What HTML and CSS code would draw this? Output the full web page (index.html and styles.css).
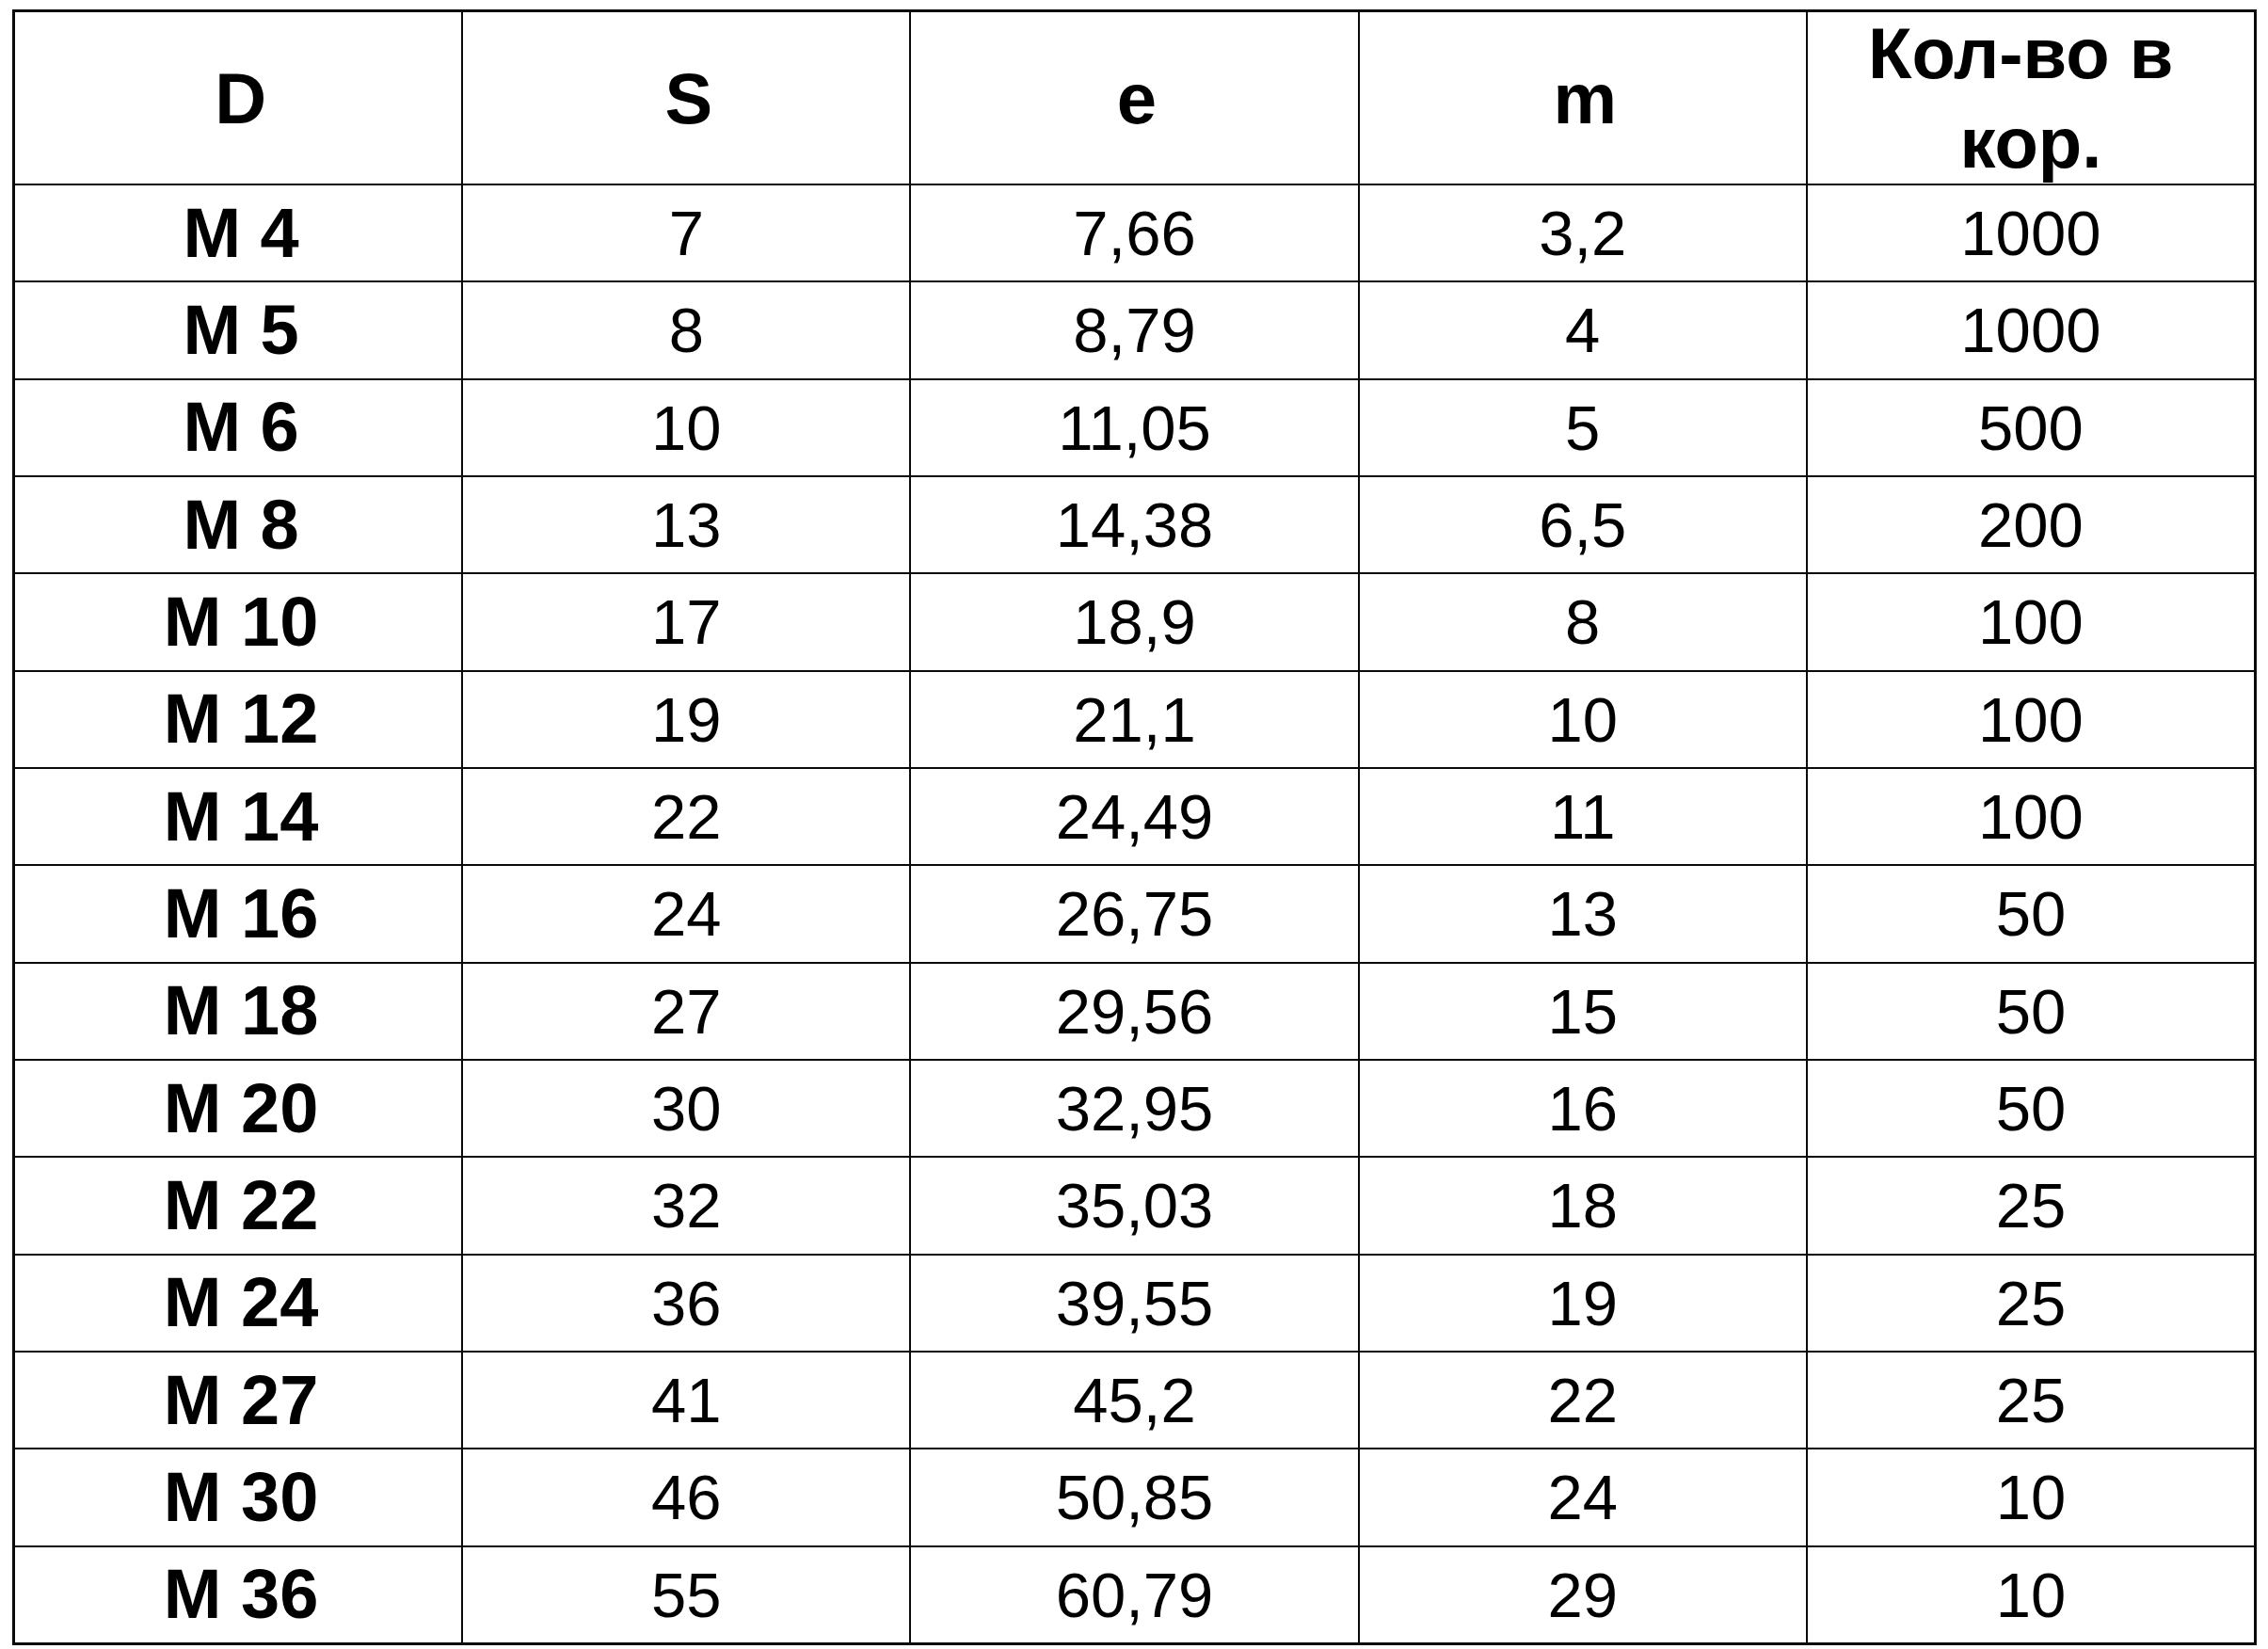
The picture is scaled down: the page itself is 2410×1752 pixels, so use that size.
FILE: index.html
```html
<!DOCTYPE html>
<html lang="ru">
<head>
<meta charset="utf-8">
<title>Размеры гаек</title>
<link rel="stylesheet" href="styles.css">
</head>
<body>
<div class="sheet">
  <div class="cell head shift">D</div>
  <div class="cell head shift">S</div>
  <div class="cell head shift">e</div>
  <div class="cell head shift">m</div>
  <div class="cell head">Кол-во в&nbsp;<br>кор.</div>

  <div class="cell size">M 4</div><div class="cell">7</div><div class="cell">7,66</div><div class="cell">3,2</div><div class="cell">1000</div>
  <div class="cell size">M 5</div><div class="cell">8</div><div class="cell">8,79</div><div class="cell">4</div><div class="cell">1000</div>
  <div class="cell size">M 6</div><div class="cell">10</div><div class="cell">11,05</div><div class="cell">5</div><div class="cell">500</div>
  <div class="cell size">M 8</div><div class="cell">13</div><div class="cell">14,38</div><div class="cell">6,5</div><div class="cell">200</div>
  <div class="cell size">M 10</div><div class="cell">17</div><div class="cell">18,9</div><div class="cell">8</div><div class="cell">100</div>
  <div class="cell size">M 12</div><div class="cell">19</div><div class="cell">21,1</div><div class="cell">10</div><div class="cell">100</div>
  <div class="cell size">M 14</div><div class="cell">22</div><div class="cell">24,49</div><div class="cell">11</div><div class="cell">100</div>
  <div class="cell size">M 16</div><div class="cell">24</div><div class="cell">26,75</div><div class="cell">13</div><div class="cell">50</div>
  <div class="cell size">M 18</div><div class="cell">27</div><div class="cell">29,56</div><div class="cell">15</div><div class="cell">50</div>
  <div class="cell size">M 20</div><div class="cell">30</div><div class="cell">32,95</div><div class="cell">16</div><div class="cell">50</div>
  <div class="cell size">M 22</div><div class="cell">32</div><div class="cell">35,03</div><div class="cell">18</div><div class="cell">25</div>
  <div class="cell size">M 24</div><div class="cell">36</div><div class="cell">39,55</div><div class="cell">19</div><div class="cell">25</div>
  <div class="cell size">M 27</div><div class="cell">41</div><div class="cell">45,2</div><div class="cell">22</div><div class="cell">25</div>
  <div class="cell size">M 30</div><div class="cell">46</div><div class="cell">50,85</div><div class="cell">24</div><div class="cell">10</div>
  <div class="cell size">M 36</div><div class="cell">55</div><div class="cell">60,79</div><div class="cell">29</div><div class="cell">10</div>
</div>
</body>
</html>
```

FILE: styles.css
```css
html, body {
  margin: 0;
  padding: 0;
  background: #ffffff;
}

body {
  font-family: "Liberation Sans", Arial, sans-serif;
  color: #000000;
}

.sheet {
  box-sizing: border-box;
  margin: 10px 0 0 13px;
  width: 2385px;
  height: 1738px;
  border: 3px solid #0a0a0a;
  background: #0a0a0a;
  display: grid;
  grid-template-columns: repeat(5, 1fr);
  grid-template-rows: 182px repeat(15, 1fr);
  gap: 2px;
}

.cell {
  background: #ffffff;
  display: flex;
  align-items: center;
  justify-content: center;
  text-align: center;
  font-size: 67px;
  line-height: 1;
  min-height: 0;
  overflow: visible;
}

.head {
  font-weight: bold;
  font-size: 76px;
  line-height: 95px;
}

.size {
  font-weight: bold;
  font-size: 74px;
  padding-left: 6px;
}

.shift {
  padding-left: 5px;
}
```
